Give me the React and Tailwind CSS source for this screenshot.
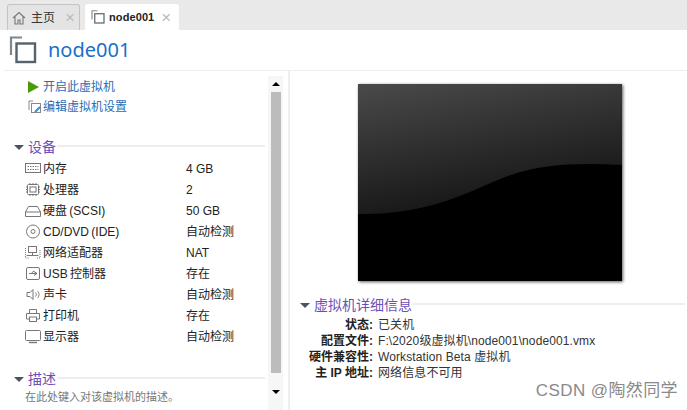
const FONT = "font-['Liberation_Sans','Noto_Sans_CJK_SC',sans-serif]"

function VmIcon({ className }) {
  return (
    <svg viewBox="0 0 28 28" className={className} fill="none" stroke="#56626c" strokeWidth="2.2">
      <path d="M13 1.5H2V19" stroke="#7d8790" />
      <rect x="7.5" y="7.5" width="18.5" height="18.5" strokeWidth="2.4" />
    </svg>
  )
}

function HomeIcon() {
  return (
    <svg viewBox="0 0 14 14" className="w-[14px] h-[14px]" fill="none" stroke="#777" strokeWidth="1.1">
      <path d="M1 7l6-5.5L13 7M3 5.5V13h3V9h2v4h3V5.5" />
    </svg>
  )
}

function Caret() {
  return <div className="w-0 h-0 border-l-[5px] border-r-[5px] border-t-[5px] border-l-transparent border-r-transparent border-t-[#4a5560]" />
}

function SectionTitle({ title }) {
  return (
    <div className="flex items-center">
      <div className="w-[14px] shrink-0 flex justify-start"><Caret /></div>
      <span className="text-[14px] leading-[18px] text-[#6a4fb8]">{title}</span>
      <div className="flex-1 h-[2px] bg-[#eeeeee] ml-[1px] mt-[-2px]" />
    </div>
  )
}

const stroke = { fill: 'none', stroke: '#777', strokeWidth: 1 }

const DEVICE_ICONS = {
  memory: <g {...stroke}><rect x="0.5" y="2.5" width="15" height="9" /><path d="M2.5 5.5h11M2.5 8.5h11" strokeDasharray="1.5 1" /></g>,
  cpu: <g {...stroke}><rect x="2.5" y="2.5" width="11" height="10" rx="1" /><rect x="5" y="5" width="6" height="5" /><path d="M1 5h1M1 7.5h1M1 10h1M14 5h1M14 7.5h1M14 10h1M5 1v1M8 1v1M11 1v1M5 13v1M8 13v1M11 13v1" /></g>,
  disk: <g {...stroke}><path d="M3.5 3.5h9L15.5 9v4.5H.5V9zM.5 9h15" /></g>,
  cd: <g {...stroke}><circle cx="8" cy="7.5" r="6.5" /><circle cx="8" cy="7.5" r="2" /></g>,
  net: <g {...stroke}><rect x="3.5" y="1.5" width="8" height="6" /><path d="M7.5 7.5v3M1.5 10.5h12" /><path d="M.5 3v10h4M15 5v8h-4" strokeDasharray="1 1" /></g>,
  usb: <g {...stroke}><rect x="1.5" y="1.5" width="13" height="12" rx="1.5" /><path d="M4 7.5h8M9 5.5l3 2-3 2M6.5 7.5l1.5-2h1" /></g>,
  sound: <g {...stroke}><path d="M2 5.5h3l3-3v10l-3-3H2zM10.5 5.5c1 1 1 3 0 4M12.5 4c2 2 2 5 0 7" /></g>,
  printer: <g {...stroke}><path d="M4.5 5V1.5h7V5M4.5 11H1.5V5.5h13V11h-3" /><rect x="4.5" y="9" width="7" height="4.5" /></g>,
  display: <g {...stroke}><rect x="0.5" y="1.5" width="15" height="10" rx="1" /><path d="M4 13.5h8" strokeWidth="1.4" /></g>,
}

const DEVICES = [
  ['memory', '内存', '4 GB'],
  ['cpu', '处理器', '2'],
  ['disk', '硬盘 (SCSI)', '50 GB'],
  ['cd', 'CD/DVD (IDE)', '自动检测'],
  ['net', '网络适配器', 'NAT'],
  ['usb', 'USB 控制器', '存在'],
  ['sound', '声卡', '自动检测'],
  ['printer', '打印机', '存在'],
  ['display', '显示器', '自动检测'],
]

const DETAILS = [
  ['状态:', '已关机'],
  ['配置文件:', 'F:\\2020级虚拟机\\node001\\node001.vmx'],
  ['硬件兼容性:', 'Workstation Beta 虚拟机'],
  ['主 IP 地址:', '网络信息不可用'],
]

function Preview() {
  return (
    <div className="w-[264px] h-[197px] bg-black shadow-[1px_1px_3px_rgba(0,0,0,0.65)]">
      <svg viewBox="0 0 264 197" className="w-full h-full block">
        <defs>
          <linearGradient id="gloss" x1="0" y1="0" x2="0.35" y2="1">
            <stop offset="0" stopColor="#4a4a4a" />
            <stop offset="1" stopColor="#151515" />
          </linearGradient>
        </defs>
        <path d="M0 0H264V81C225 79 185 79 150 92C125 101 100 116 62 124C40 129 20 130 0 130Z" fill="url(#gloss)" />
      </svg>
    </div>
  )
}

export default function App() {
  return (
    <div className={`w-[687px] h-[410px] overflow-hidden bg-white relative text-[#222] ${FONT}`}>
      {/* Tabs */}
      <div className="h-[30px] bg-[#e9e9e9] flex items-end pl-[7px] gap-[5px]">
        <div className="w-[73px] h-[26px] bg-[#e4e4e4] border border-b-0 border-[#c4c4c4] rounded-t-[3px] flex items-center pl-[4px] text-[12px]">
          <HomeIcon />
          <span className="ml-[5px] text-[#333]">主页</span>
          <span className="ml-[10px] text-[#bbb] text-[17px] leading-none">×</span>
        </div>
        <div className="w-[94px] h-[26px] bg-white rounded-t-[3px] flex items-center pl-[6px] text-[11px] font-bold">
          <VmIcon className="w-[14px] h-[14px]" />
          <span className="ml-[4px] tracking-[0.1px]">node001</span>
          <span className="ml-[7px] text-[#bbb] font-normal text-[17px] leading-none">×</span>
        </div>
      </div>

      {/* Header */}
      <div className="h-[41px] ml-[4px] border-b border-[#eeeeee] flex items-center pl-[5px]">
        <VmIcon className="w-[28px] h-[28px]" />
        <span className="ml-[11px] text-[20px] text-[#1a6fc9] font-['Noto_Sans',sans-serif]">node001</span>
      </div>

      <div className="flex h-[339px]">
        {/* Left panel */}
        <div className="w-[290px] shrink-0 border-r-2 border-[#eeeeee] flex pl-[14px] pr-[5px]">
          <div className="w-[251px] shrink-0 pt-[6px]">
            <div className="pl-[14px] text-[12px] text-[#2a6db5]">
              <div className="h-[19px] flex items-center">
                <div className="w-0 h-0 border-l-[11px] border-t-[6px] border-b-[6px] border-l-[#4c9a0a] border-t-transparent border-b-transparent" />
                <span className="ml-[4px]">开启此虚拟机</span>
              </div>
              <div className="h-[19px] mt-[1px] flex items-center">
                <svg viewBox="0 0 14 14" className="w-[14px] h-[14px]" fill="none">
                  <path d="M5 1H1v9" stroke="#888" />
                  <rect x="3.5" y="3.5" width="9" height="9" stroke="#888" />
                  <path d="M12 7l-5 5" stroke="#2a8fd8" strokeWidth="2" />
                </svg>
                <span className="ml-[1px]">编辑虚拟机设置</span>
              </div>
            </div>

            <div className="mt-[22px]"><SectionTitle title="设备" /></div>
            <div className="mt-[2px] pl-[11px] text-[12px] [word-spacing:-1px]">
              {DEVICES.map(([icon, name, value]) => (
                <div key={name} className="h-[21px] flex items-center">
                  <svg viewBox="0 0 16 15" className="w-[16px] h-[15px] shrink-0">{DEVICE_ICONS[icon]}</svg>
                  <span className="ml-[2px] w-[143px] whitespace-nowrap">{name}</span>
                  <span className="whitespace-nowrap [word-spacing:0]">{value}</span>
                </div>
              ))}
            </div>

            <div className="mt-[23px]"><SectionTitle title="描述" /></div>
            <p className="mt-[1px] pl-[11px] text-[11px] text-[#777] whitespace-nowrap">在此处键入对该虚拟机的描述。</p>
          </div>

          {/* Scrollbar */}
          <div className="w-[16px] ml-[3px] mt-[5px] bg-[#f6f6f6] flex flex-col items-center">
            <div className="h-[16px] flex items-center">
              <div className="w-0 h-0 border-l-[4px] border-r-[4px] border-b-[4px] border-l-transparent border-r-transparent border-b-black" />
            </div>
            <div className="w-[10px] h-[281px] bg-[#bcbcbc]" />
            <div className="flex-1 flex items-center">
              <div className="w-0 h-0 border-l-[4px] border-r-[4px] border-t-[4px] border-l-transparent border-r-transparent border-t-black" />
            </div>
          </div>
        </div>

        {/* Right panel */}
        <div className="flex-1 pt-[13px]">
          <div className="pl-[68px]"><Preview /></div>
          <div className="mt-[15px] pl-[10px] pr-[2px]"><SectionTitle title="虚拟机详细信息" /></div>
          <div className="text-[12px] leading-[16px] mt-[3px]">
            {DETAILS.map(([label, value]) => (
              <div key={label} className="flex whitespace-nowrap">
                <span className="w-[83px] text-right font-bold">{label}</span>
                <span className="ml-[5px] text-[#333] tracking-[0.1px]">{value}</span>
              </div>
            ))}
          </div>
        </div>
      </div>

      {/* Watermark */}
      <div className="absolute right-[9px] bottom-[9px] text-[17px] leading-[20px] tracking-[0.4px] text-[#8a8a8a] whitespace-nowrap">CSDN @陶然同学</div>
    </div>
  )
}
